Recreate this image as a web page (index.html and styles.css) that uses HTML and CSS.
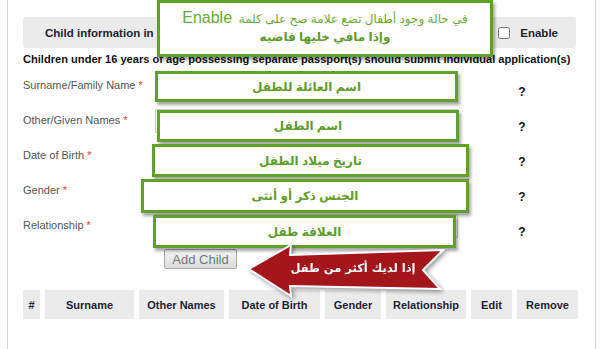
FILE: index.html
```html
<!DOCTYPE html>
<html lang="en">
  <head>
    <meta charset="UTF-8" />
    <title>Child information</title>
    <link rel="stylesheet" href="styles.css">
  </head>
  <body>
    <div class="page">
      <div class="section-head">
        <span class="section-title">Child information in passport</span>
        <label class="enable"><input type="checkbox" /> Enable</label>
      </div>
      <p class="note">Children under 16 years of age possessing separate passport(s) should submit individual application(s)</p>

      <div class="child-form">
        <div class="row">
          <label>Surname/Family Name <span class="req">*</span></label>
          <input class="field field-focus" type="text" />
          <span class="help">?</span>
        </div>
        <div class="row">
          <label>Other/Given Names <span class="req">*</span></label>
          <input class="field" type="text" />
          <span class="help">?</span>
        </div>
        <div class="row">
          <label>Date of Birth <span class="req">*</span></label>
          <input class="field" type="text" />
          <span class="help">?</span>
        </div>
        <div class="row">
          <label>Gender <span class="req">*</span></label>
          <input class="field" type="text" />
          <span class="help">?</span>
        </div>
        <div class="row">
          <label>Relationship <span class="req">*</span></label>
          <input class="field" type="text" />
          <span class="help">?</span>
        </div>
      </div>

      <button class="add-child" type="button">Add Child</button>

      <table class="children">
        <tr>
          <th class="c-num">#</th>
          <th class="c-surname">Surname</th>
          <th class="c-other">Other Names</th>
          <th class="c-dob">Date of Birth</th>
          <th class="c-gender">Gender</th>
          <th class="c-rel">Relationship</th>
          <th class="c-edit">Edit</th>
          <th class="c-remove">Remove</th>
        </tr>
      </table>
    </div>

    <!-- annotations drawn over the form -->
    <div class="tip tip-enable">
      <div class="tip-line">في حالة وجود أطفال تضع علامة صح على كلمة &nbsp;<span class="tip-en">Enable</span></div>
      <div class="tip-line tip-bold">وإذا مافي خليها فاضيه</div>
    </div>
    <div class="tip tip-surname">اسم العائلة للطفل</div>
    <div class="tip tip-given">اسم الطفل</div>
    <div class="tip tip-dob">تاريخ ميلاد الطفل</div>
    <div class="tip tip-gender">الجنس ذكر أو أنثى</div>
    <div class="tip tip-rel">العلاقة طفل</div>

    <svg class="more-arrow" width="206" height="60" viewBox="0 0 206 60">
      <polygon points="6,28 48,4 47,14 200,9 180,29 197,48 47,45 48,55" fill="#a3161c" stroke="#fff" stroke-width="2" stroke-linejoin="miter" />
      <text x="110" y="27" text-anchor="middle" dominant-baseline="central" direction="rtl">إذا لديك أكثر من طفل</text>
    </svg>
  </body>
</html>
```

FILE: styles.css
```css
body {
  margin: 0;
  background: #fff;
  font: 11px "Liberation Sans", "DejaVu Sans", Arial, sans-serif;
  color: #222;
}
.page {
  box-sizing: border-box;
  width: 589px;
  height: 349px;
  margin-left: 7px;
  padding: 17px 19px 0 15px;
  border-left: 1px solid #d6d6d6;
  border-right: 1px solid #d6d6d6;
  overflow: hidden;
}
.section-head {
  display: flex;
  align-items: center;
  justify-content: space-between;
  height: 31px;
  padding: 0 18px 0 22px;
  background: #ebebeb;
  border-radius: 3px;
  font-size: 11.5px;
  font-weight: bold;
  color: #1f1f33;
}
.enable {
  display: flex;
  align-items: center;
  gap: 10px;
}
.enable input {
  width: 12px;
  height: 12px;
  margin: 0;
}
.note {
  margin: 4px 0 0;
  font-weight: bold;
  font-size: 11.1px;
  line-height: 14px;
  color: #111;
  white-space: nowrap;
}
.child-form {
  margin-top: 4px;
}
.row {
  display: grid;
  grid-template-columns: 132px 303px 1fr;
  height: 35px;
}
.row label {
  padding-top: 8px;
  line-height: 14px;
  font-size: 11px;
  color: #555;
}
.req {
  color: #e03a3a;
}
.field {
  box-sizing: border-box;
  height: 24px;
  margin-top: 4px;
  border: 1px solid #ccc;
}
.field-focus {
  border-color: #2a8fd6;
}
.help {
  padding: 15px 0 0 10px;
  line-height: 14px;
  font-size: 12px;
  text-align: center;
  font-weight: bold;
  color: #111;
}
.add-child {
  display: block;
  box-sizing: border-box;
  width: 73px;
  height: 20px;
  margin: 4px 0 0 141px;
  padding: 0;
  font: 13px "Liberation Sans", Arial, sans-serif;
  color: #777;
  background: linear-gradient(#f5f5f5, #dcdcdc);
  border: 1px solid #a9a9a9;
  border-radius: 2px;
}
.children {
  width: 565px;
  margin: 21px 0 0 -5px;
  border-spacing: 5px 0;
  table-layout: fixed;
}
.children th {
  height: 29px;
  padding: 0;
  background: #ebebeb;
  font-size: 11px;
  color: #1f1f33;
  text-align: center;
}
.c-num { width: 17px; }
.c-surname { width: 89px; }
.c-other { width: 85px; }
.c-dob { width: 91px; }
.c-gender { width: 56px; }
.c-rel { width: 80px; }
.c-edit { width: 41px; }
.c-remove { width: 61px; }

/* green callouts */
.tip {
  position: absolute;
  box-sizing: border-box;
  display: flex;
  align-items: center;
  justify-content: center;
  background: #fff;
  border: 3px solid #62a02d;
  box-shadow: 2px 3px 3px rgba(0, 0, 0, 0.35);
  direction: rtl;
  font-size: 12px;
  font-weight: bold;
  color: #5f9d2b;
}
.tip-enable {
  flex-direction: column;
  gap: 1px;
  left: 157px;
  top: 0;
  width: 336px;
  height: 57px;
  padding-bottom: 2px;
  font-weight: normal;
  font-size: 12px;
  color: #6aab35;
}
.tip-line {
  line-height: 17px;
}
.tip-en {
  font-size: 16px;
}
.tip-bold {
  font-weight: bold;
  font-size: 12px;
  color: #5f9d2b;
}
.tip-surname { left: 155px; top: 71px; width: 303px; height: 31px; }
.tip-given { left: 157px; top: 110px; width: 302px; height: 32px; }
.tip-dob { left: 152px; top: 144px; width: 317px; height: 33px; }
.tip-gender { left: 141px; top: 179px; width: 328px; height: 34px; }
.tip-rel { left: 153px; top: 215px; width: 303px; height: 33px; }

.more-arrow {
  position: absolute;
  left: 243px;
  top: 241px;
  overflow: visible;
  filter: drop-shadow(2px 2px 2px rgba(0, 0, 0, 0.4));
}
.more-arrow text {
  font: bold 11.5px "DejaVu Sans", sans-serif;
  fill: #fff;
}
```
